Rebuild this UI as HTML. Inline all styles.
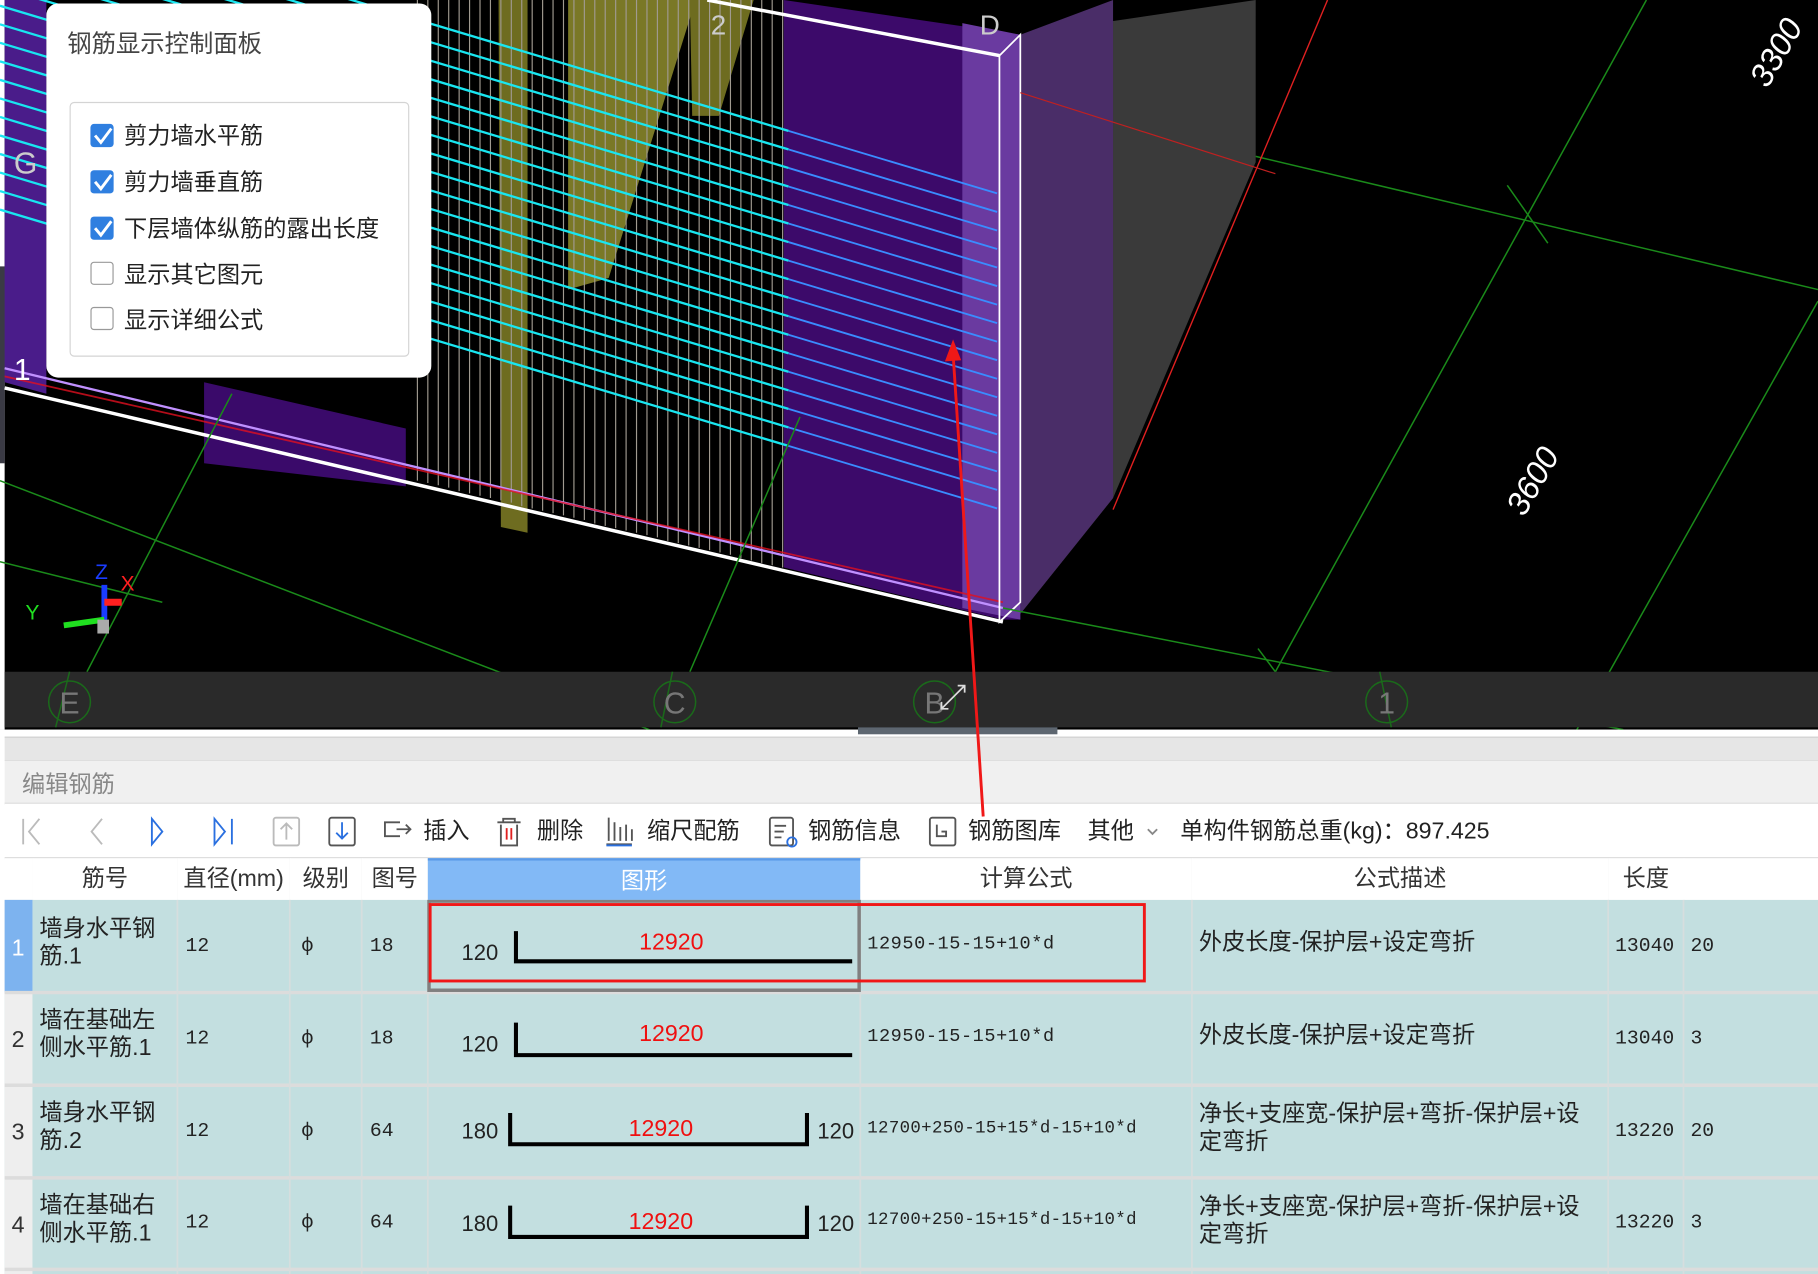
<!DOCTYPE html>
<html><head><meta charset="utf-8"><style>
html,body{margin:0;padding:0;background:#fff;overflow:hidden;width:1818px;height:1274px}
#w{position:absolute;left:0;top:0;width:1568px;height:1100px;transform:scale(1.15944,1.15818);transform-origin:0 0;font-family:"Liberation Sans","Noto Sans CJK SC",sans-serif;}
.a{position:absolute}
.cb{position:absolute;left:78px;width:20px;height:20px;border-radius:3px}
.on{background:#2f7fe0}
.off{border:1.5px solid #999;background:#fff;width:18px;height:18px}
.lbl{position:absolute;left:107px;font-size:20px;color:#222;line-height:24px}
.tb{position:absolute;top:705px;font-size:20px;color:#222;line-height:26px}
.th{position:absolute;top:741px;height:36px;line-height:36px;font-size:20px;color:#333;text-align:center;border-right:1px solid #ddd;background:#fff}
.cell{position:absolute;font-size:17px;color:#222;font-family:"Liberation Mono","Noto Sans CJK SC",monospace}
.cn{font-family:"Liberation Sans","Noto Sans CJK SC",sans-serif;font-size:20px;line-height:24px}
</style></head><body><div id="w">
<svg class="a" style="left:0;top:0" width="1568" height="630">
<rect x="0" y="0" width="1568" height="630" fill="#000"/>
<rect x="0" y="0" width="4" height="630" fill="#fff"/>
<rect x="0" y="230" width="4" height="170" fill="#3a3a44"/>
<polygon points="880,30 1083,0 1083,140 960,430 880,530" fill="#3a3a3a"/>
<polygon points="880,30 960,0 960,430 880,530" fill="#4a2d68"/>
<polygon points="4,0 40,0 40,340 4,330" fill="#4a1c8a"/>
<polygon points="176,330 350,370 350,420 176,400" fill="#3a0a6a"/>
<polygon points="676,0 880,30 880,535 865,535 676,490" fill="#3c0a6a"/>
<polygon points="830,20 880,30 880,535 830,525" fill="#6a3aa0"/>
<polygon points="430,0 455,0 455,460 432,455" fill="#6e6c20"/>
<polygon points="490,0 600,0 525,240 490,250" fill="#7a7826"/>
<polygon points="595,0 650,0 620,100 597,100" fill="#6e6c20"/>
<g stroke="#a09a90" stroke-width="1">
<line x1="360" y1="0" x2="360" y2="415"/><line x1="369" y1="0" x2="369" y2="417"/><line x1="378" y1="0" x2="378" y2="419"/><line x1="387" y1="0" x2="387" y2="421"/><line x1="396" y1="0" x2="396" y2="424"/><line x1="405" y1="0" x2="405" y2="426"/><line x1="414" y1="0" x2="414" y2="428"/><line x1="423" y1="0" x2="423" y2="430"/><line x1="432" y1="0" x2="432" y2="432"/><line x1="441" y1="0" x2="441" y2="434"/><line x1="450" y1="0" x2="450" y2="437"/><line x1="459" y1="0" x2="459" y2="439"/><line x1="468" y1="0" x2="468" y2="441"/><line x1="477" y1="0" x2="477" y2="443"/><line x1="486" y1="0" x2="486" y2="445"/><line x1="495" y1="0" x2="495" y2="447"/><line x1="504" y1="0" x2="504" y2="449"/><line x1="513" y1="0" x2="513" y2="452"/><line x1="522" y1="0" x2="522" y2="454"/><line x1="531" y1="0" x2="531" y2="456"/><line x1="540" y1="0" x2="540" y2="458"/><line x1="549" y1="0" x2="549" y2="460"/><line x1="558" y1="0" x2="558" y2="462"/><line x1="567" y1="0" x2="567" y2="464"/><line x1="576" y1="0" x2="576" y2="467"/><line x1="585" y1="0" x2="585" y2="469"/><line x1="594" y1="0" x2="594" y2="471"/><line x1="603" y1="0" x2="603" y2="473"/><line x1="612" y1="0" x2="612" y2="475"/><line x1="621" y1="0" x2="621" y2="477"/><line x1="630" y1="0" x2="630" y2="479"/><line x1="639" y1="0" x2="639" y2="482"/><line x1="648" y1="0" x2="648" y2="484"/><line x1="657" y1="0" x2="657" y2="486"/><line x1="666" y1="0" x2="666" y2="488"/><line x1="675" y1="0" x2="675" y2="490"/>
</g>
<g stroke="#19e6f0" stroke-width="2">
<line x1="0" y1="-91" x2="680" y2="113"/><line x1="0" y1="-75" x2="680" y2="129"/><line x1="0" y1="-59" x2="680" y2="145"/><line x1="0" y1="-43" x2="680" y2="161"/><line x1="0" y1="-27" x2="680" y2="177"/><line x1="0" y1="-11" x2="680" y2="193"/><line x1="0" y1="5" x2="680" y2="209"/><line x1="0" y1="21" x2="680" y2="225"/><line x1="0" y1="37" x2="680" y2="241"/><line x1="0" y1="53" x2="680" y2="257"/><line x1="0" y1="69" x2="680" y2="273"/><line x1="0" y1="85" x2="680" y2="289"/><line x1="0" y1="101" x2="680" y2="305"/><line x1="0" y1="117" x2="680" y2="321"/><line x1="0" y1="133" x2="680" y2="337"/><line x1="0" y1="149" x2="680" y2="353"/><line x1="0" y1="165" x2="680" y2="369"/><line x1="0" y1="181" x2="680" y2="385"/>
</g>
<g stroke="#3a8cff" stroke-width="1.6">
<line x1="680" y1="113" x2="860" y2="167"/><line x1="680" y1="129" x2="860" y2="183"/><line x1="680" y1="145" x2="860" y2="199"/><line x1="680" y1="161" x2="860" y2="215"/><line x1="680" y1="177" x2="860" y2="231"/><line x1="680" y1="193" x2="860" y2="247"/><line x1="680" y1="209" x2="860" y2="263"/><line x1="680" y1="225" x2="860" y2="279"/><line x1="680" y1="241" x2="860" y2="295"/><line x1="680" y1="257" x2="860" y2="311"/><line x1="680" y1="273" x2="860" y2="327"/><line x1="680" y1="289" x2="860" y2="343"/><line x1="680" y1="305" x2="860" y2="359"/><line x1="680" y1="321" x2="860" y2="375"/><line x1="680" y1="337" x2="860" y2="391"/><line x1="680" y1="353" x2="860" y2="407"/><line x1="680" y1="369" x2="860" y2="423"/><line x1="680" y1="385" x2="860" y2="439"/>
</g>
<line x1="4" y1="318" x2="865" y2="525" stroke="#c090ff" stroke-width="2"/>
<line x1="4" y1="325" x2="865" y2="520" stroke="#e01020" stroke-width="1.5" opacity=".8"/>
<line x1="4" y1="335" x2="865" y2="537" stroke="#fff" stroke-width="3"/>
<line x1="610" y1="0" x2="862" y2="48" stroke="#fff" stroke-width="3"/>
<polyline points="862,48 880,30 880,520 862,537 862,48" fill="none" stroke="#fff" stroke-width="1.5"/>
<g stroke="#1a8a1a" stroke-width="1.3" fill="none">
<line x1="0" y1="415" x2="560" y2="630"/>
<line x1="75" y1="580" x2="200" y2="340"/>
<line x1="595" y1="580" x2="690" y2="360"/>
<line x1="865" y1="525" x2="1400" y2="630"/>
<line x1="1083" y1="135" x2="1568" y2="250"/>
<line x1="1100" y1="580" x2="1420" y2="0"/>
<line x1="1360" y1="630" x2="1568" y2="260"/>
<line x1="1300" y1="160" x2="1335" y2="210"/>
<line x1="1085" y1="560" x2="1115" y2="600"/>
<line x1="0" y1="485" x2="140" y2="520"/>
</g>
<line x1="1145" y1="0" x2="960" y2="440" stroke="#e02020" stroke-width="1.2"/>
<line x1="880" y1="80" x2="1100" y2="150" stroke="#c02020" stroke-width="1"/>
<line x1="90" y1="535" x2="90" y2="505" stroke="#1a3cff" stroke-width="5"/>
<line x1="90" y1="535" x2="55" y2="540" stroke="#20e020" stroke-width="5"/>
<line x1="90" y1="520" x2="105" y2="520" stroke="#ff2020" stroke-width="6"/>
<rect x="84" y="535" width="10" height="12" fill="#aaa"/>
<text x="82" y="500" fill="#1a3cff" font-size="18" font-family="Liberation Sans">Z</text>
<text x="104" y="510" fill="#ff2020" font-size="18" font-family="Liberation Sans">X</text>
<text x="22" y="535" fill="#20e020" font-size="18" font-family="Liberation Sans">Y</text>
<text x="1540" y="50" fill="#fff" font-size="28" font-style="italic" font-family="Liberation Sans" transform="rotate(-60 1540 50)" text-anchor="middle">3300</text>
<text x="1330" y="420" fill="#fff" font-size="28" font-style="italic" font-family="Liberation Sans" transform="rotate(-60 1330 420)" text-anchor="middle">3600</text>
<text x="12" y="150" fill="#ccc" font-size="26" font-family="Liberation Sans">G</text>
<text x="12" y="328" fill="#fff" font-size="26" font-family="Liberation Sans">1</text>
<text x="613" y="30" fill="#ccc" font-size="24" font-family="Liberation Sans">2</text>
<text x="845" y="30" fill="#ccc" font-size="24" font-family="Liberation Sans">D</text>
<rect x="4" y="580" width="1564" height="48" fill="#2a2a2a"/>
<g stroke="#1a6a1a" stroke-width="1.3" fill="none">
<line x1="60" y1="580" x2="48" y2="628"/><line x1="580" y1="580" x2="570" y2="628"/><line x1="1190" y1="580" x2="1200" y2="628"/>
<circle cx="60" cy="606" r="18"/><circle cx="582" cy="606" r="18"/><circle cx="806" cy="606" r="18"/><circle cx="1196" cy="606" r="18"/>
</g>
<g fill="#777" font-size="26" font-family="Liberation Sans" text-anchor="middle">
<text x="60" y="616">E</text><text x="582" y="616">C</text><text x="806" y="616">B</text><text x="1196" y="616">1</text>
</g>
<path d="M812 612 L832 592 M826 592 L832 592 L832 598 M812 606 L812 612 L818 612" stroke="#ddd" stroke-width="1.5" fill="none"/>
</svg>
<div class="a" style="left:40px;top:3px;width:332px;height:323px;background:#fff;border-radius:10px"></div>
<div class="a" style="left:58px;top:22px;font-size:21px;color:#444">钢筋显示控制面板</div>
<div class="a" style="left:60px;top:88px;width:291px;height:218px;border:1.5px solid #d4d4d4;border-radius:4px"></div>
<div class="cb on" style="top:107px"></div><div class="lbl" style="top:106px">剪力墙水平筋</div>
<div class="cb on" style="top:147px"></div><div class="lbl" style="top:146px">剪力墙垂直筋</div>
<div class="cb on" style="top:187px"></div><div class="lbl" style="top:186px">下层墙体纵筋的露出长度</div>
<div class="cb off" style="top:226px"></div><div class="lbl" style="top:226px">显示其它图元</div>
<div class="cb off" style="top:265px"></div><div class="lbl" style="top:265px">显示详细公式</div>
<svg class="a" style="left:0;top:0" width="110" height="220"><g stroke="#fff" stroke-width="2.5" fill="none"><path d="M82 117 l5 6 l9 -12"/><path d="M82 157 l5 6 l9 -12"/><path d="M82 197 l5 6 l9 -12"/></g></svg>
<div class="a" style="left:740px;top:628px;width:172px;height:6px;background:#5d6670"></div>
<div class="a" style="left:4px;top:636px;width:1564px;height:19px;background:#e6e6e6;border-top:1px solid #d0d0d0"></div>
<div class="a" style="left:4px;top:656px;width:1564px;height:36px;background:#f0f0f0;border-top:1px solid #ddd;border-bottom:2px solid #ddd"></div>
<div class="a" style="left:19px;top:661px;font-size:20px;color:#888">编辑钢筋</div>
<div class="a" style="left:4px;top:694px;width:1564px;height:46px;background:#fff;border-bottom:2px solid #ddd"></div>
<svg class="a" style="left:0;top:700px" width="1020" height="36"><g fill="none" stroke-width="1.6">
<path d="M20 7 v22 M34 7 l-9 11 l9 11" stroke="#bbb"/>
<path d="M88 7 l-9 11 l9 11" stroke="#bbb"/>
<path d="M131 7 l9 11 l-9 11z" stroke="#2a70e0"/>
<path d="M185 7 l9 11 l-9 11z M200 7 v22" stroke="#2a70e0"/>
<rect x="236" y="6" width="22" height="24" rx="2" stroke="#bbb"/><path d="M247 25 v-13 M242 16 l5 -5 l5 5" stroke="#bbb"/>
<rect x="284" y="6" width="22" height="24" rx="2" stroke="#555"/><path d="M295 10 v13 M290 19 l5 5 l5 -5" stroke="#2a70e0"/>
<path d="M345 10 h-13 v12 h13 M342 16 h12 M350 12 l4 4 l-4 4" stroke="#555"/>
<path d="M429 10 h20 M434 10 v-3 h10 v3 M432 12 v18 h14 v-18" stroke="#555"/><path d="M437 15 v10 M441 15 v10" stroke="#e02020"/>
<path d="M525 6 v20 M530 10 v16 M535 14 v12 M540 12 v14 M545 16 v10 M523 29 h22" stroke="#555"/><path d="M523 30 h22" stroke="#2a70e0"/>
<rect x="664" y="6" width="20" height="24" rx="2" stroke="#555"/><path d="M668 13 h10 M668 18 h8 M668 23 h6" stroke="#555"/><circle cx="683" cy="27" r="4" stroke="#2a70e0"/>
<rect x="802" y="6" width="22" height="24" rx="2" stroke="#555"/><path d="M808 12 v10 h8 v-4 h-4" stroke="#555"/>
<path d="M990 16 l4 4 l4 -4" stroke="#888"/>
</g></svg>
<div class="tb" style="left:365px">插入</div>
<div class="tb" style="left:463px">删除</div>
<div class="tb" style="left:558px">缩尺配筋</div>
<div class="tb" style="left:697px">钢筋信息</div>
<div class="tb" style="left:835px">钢筋图库</div>
<div class="tb" style="left:938px">其他</div>
<div class="tb" style="left:1018px">单构件钢筋总重(kg)：897.425</div>
<div class="th" style="left:4px;width:24px"></div>
<div class="th" style="left:28px;width:125px">筋号</div>
<div class="th" style="left:153px;width:97px">直径(mm)</div>
<div class="th" style="left:250px;width:62px">级别</div>
<div class="th" style="left:312px;width:57px">图号</div>
<div class="th" style="left:369px;width:373px;background:#82b9f6;color:#fff;border-top:2px solid #5a9ae8">图形</div>
<div class="th" style="left:742px;width:286px">计算公式</div>
<div class="th" style="left:1028px;width:359px">公式描述</div>
<div class="th" style="left:1387px;width:65px">长度</div>
<div class="th" style="left:1452px;width:116px;border-right:none"></div>
<div class="a" style="left:4px;top:777px;width:1564px;height:323px;background:#c3dfe0"></div>
<div class="a" style="left:4px;top:777px;width:24px;height:323px;background:#eeeeee"></div>
<div class="a" style="left:4px;top:777px;width:24px;height:80px;background:#7db3ef"></div>
<svg class="a" style="left:0;top:777px" width="1568" height="323"><g stroke="#dcdcdc" stroke-width="3">
<line x1="4" y1="80" x2="1568" y2="80"/><line x1="4" y1="160" x2="1568" y2="160"/><line x1="4" y1="240" x2="1568" y2="240"/><line x1="4" y1="319" x2="1568" y2="319"/></g>
<g stroke="#d6dede" stroke-width="1.5"><line x1="153" y1="0" x2="153" y2="323"/><line x1="250" y1="0" x2="250" y2="323"/><line x1="312" y1="0" x2="312" y2="323"/><line x1="369" y1="0" x2="369" y2="323"/><line x1="742" y1="0" x2="742" y2="323"/><line x1="1028" y1="0" x2="1028" y2="323"/><line x1="1387" y1="0" x2="1387" y2="323"/><line x1="1452" y1="0" x2="1452" y2="323"/></g>
<g stroke="#000" stroke-width="3.5" fill="none">
<path d="M445 27 v26 h290"/><path d="M445 106 v28 h290"/>
<path d="M440 184 v27 h256 v-27"/><path d="M440 264 v27 h256 v-27"/></g>
<rect x="370" y="1" width="371" height="77" fill="none" stroke="#808080" stroke-width="3"/>
<rect x="371" y="4" width="616" height="66" fill="none" stroke="#f01818" stroke-width="2.5"/>
<g font-family="Liberation Sans" font-size="20" fill="#f01010" text-anchor="middle"><text x="579" y="43">12920</text><text x="579" y="122">12920</text><text x="570" y="204">12920</text><text x="570" y="284">12920</text></g>
<g font-family="Liberation Sans" font-size="19" fill="#222"><text x="398" y="52">120</text><text x="398" y="131">120</text><text x="398" y="206">180</text><text x="705" y="206">120</text><text x="398" y="286">180</text><text x="705" y="286">120</text></g>
<g font-family="Liberation Sans" font-size="20" fill="#fff"><text x="10" y="48">1</text></g>
<g font-family="Liberation Sans" font-size="20" fill="#333"><text x="10" y="127">2</text><text x="10" y="207">3</text><text x="10" y="287">4</text></g>
</svg>
<div class="cell cn" style="left:34px;top:790px;width:115px">墙身水平钢筋.1</div>
<div class="cell cn" style="left:34px;top:869px;width:115px">墙在基础左侧水平筋.1</div>
<div class="cell cn" style="left:34px;top:949px;width:115px">墙身水平钢筋.2</div>
<div class="cell cn" style="left:34px;top:1029px;width:115px">墙在基础右侧水平筋.1</div>
<div class="cell" style="left:160px;top:808px">12</div><div class="cell" style="left:160px;top:888px">12</div><div class="cell" style="left:160px;top:968px">12</div><div class="cell" style="left:160px;top:1047px">12</div>
<div class="cell" style="left:260px;top:808px">ф</div><div class="cell" style="left:260px;top:888px">ф</div><div class="cell" style="left:260px;top:968px">ф</div><div class="cell" style="left:260px;top:1047px">ф</div>
<div class="cell" style="left:319px;top:808px">18</div><div class="cell" style="left:319px;top:888px">18</div><div class="cell" style="left:319px;top:968px">64</div><div class="cell" style="left:319px;top:1047px">64</div>
<div class="cell" style="left:748px;top:806px;font-size:16px;letter-spacing:.5px">12950-15-15+10*d</div>
<div class="cell" style="left:748px;top:886px;font-size:16px;letter-spacing:.5px">12950-15-15+10*d</div>
<div class="cell" style="left:748px;top:966px;font-size:15px;letter-spacing:.3px">12700+250-15+15*d-15+10*d</div>
<div class="cell" style="left:748px;top:1045px;font-size:15px;letter-spacing:.3px">12700+250-15+15*d-15+10*d</div>
<div class="cell cn" style="left:1034px;top:802px">外皮长度-保护层+设定弯折</div>
<div class="cell cn" style="left:1034px;top:882px">外皮长度-保护层+设定弯折</div>
<div class="cell cn" style="left:1034px;top:950px;width:342px">净长+支座宽-保护层+弯折-保护层+设定弯折</div>
<div class="cell cn" style="left:1034px;top:1030px;width:342px">净长+支座宽-保护层+弯折-保护层+设定弯折</div>
<div class="cell" style="left:1393px;top:808px">13040</div><div class="cell" style="left:1393px;top:888px">13040</div><div class="cell" style="left:1393px;top:968px">13220</div><div class="cell" style="left:1393px;top:1047px">13220</div>
<div class="cell" style="left:1458px;top:808px">20</div><div class="cell" style="left:1458px;top:888px">3</div><div class="cell" style="left:1458px;top:968px">20</div><div class="cell" style="left:1458px;top:1047px">3</div>
<svg class="a" style="left:0;top:0" width="1568" height="1100"><line x1="822" y1="305" x2="848" y2="705" stroke="#f01818" stroke-width="2.5"/><polygon points="822,293 815,312 829,311" fill="#f01818"/></svg>
</div></body></html>
